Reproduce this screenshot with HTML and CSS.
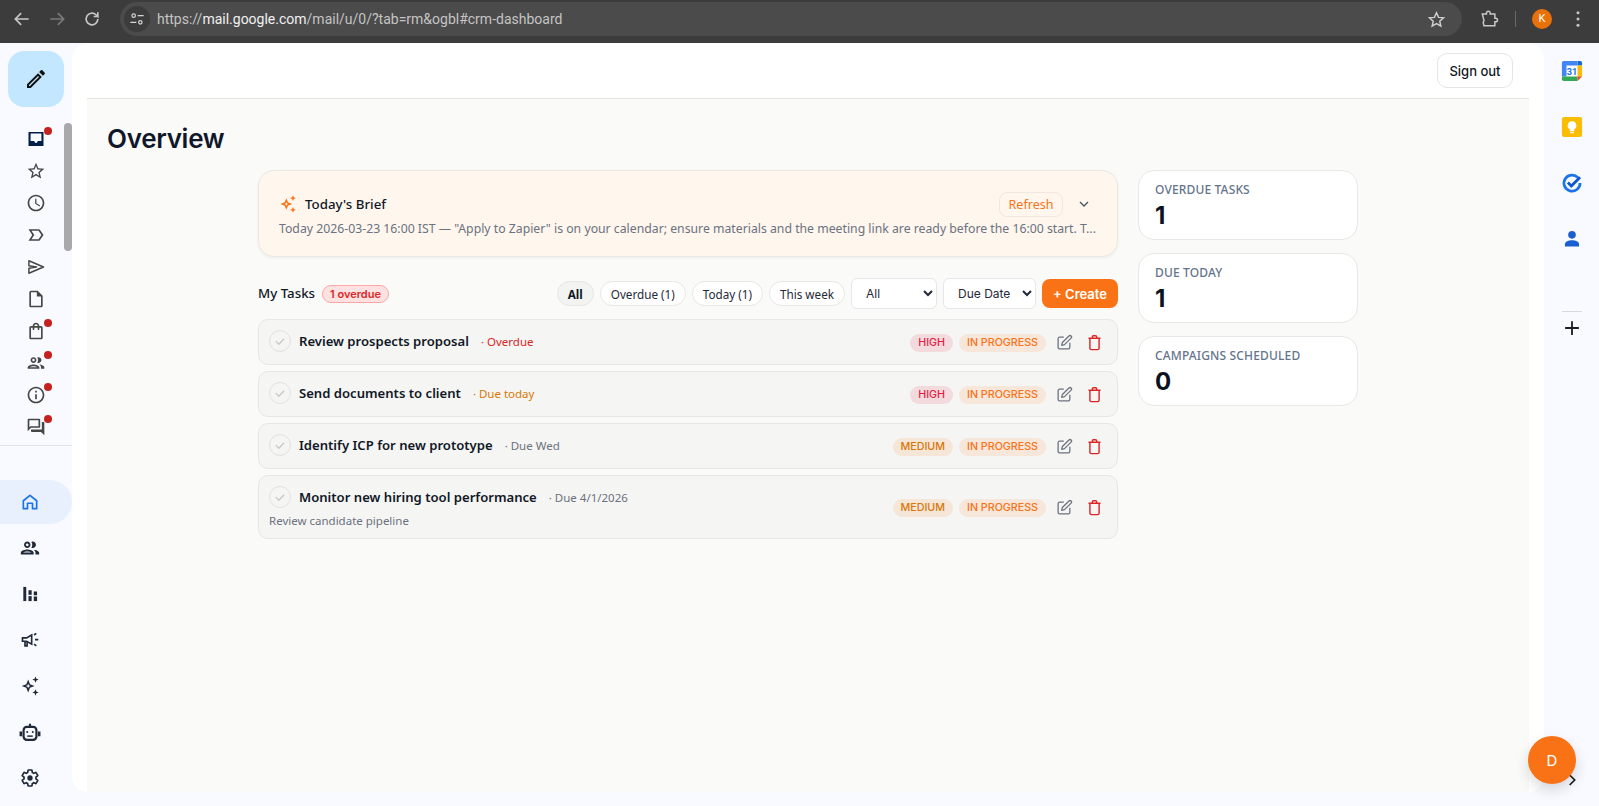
FILE: index.html
```html
<!DOCTYPE html>
<html lang="en">
<head>
<meta charset="utf-8">
<title>CRM Dashboard</title>
<link rel="stylesheet" href="styles.css">
</head>
<body>
<header class="chrome">
  <div class="nav-btns">
    <svg class="cicon" viewBox="0 0 24 24"><path d="M20 12H5M11 5l-7 7 7 7" fill="none" stroke="#c7c7c7" stroke-width="2"/></svg>
    <svg class="cicon" viewBox="0 0 24 24"><path d="M4 12h15M13 5l7 7-7 7" fill="none" stroke="#7a7a7a" stroke-width="2"/></svg>
    <svg class="cicon" viewBox="0 0 24 24"><path d="M19 12a7 7 0 1 1-2.2-5.1L19 9V4M19 9h-5" fill="none" stroke="#c7c7c7" stroke-width="2"/></svg>
  </div>
  <div class="omnibox">
    <span class="site-chip"><svg viewBox="0 0 24 24" width="16" height="16"><circle cx="7" cy="7" r="2.6" fill="none" stroke="#d5d5d5" stroke-width="1.8"/><path d="M13 7h9M2 17h9" stroke="#d5d5d5" stroke-width="1.8"/><circle cx="17" cy="17" r="2.6" fill="none" stroke="#d5d5d5" stroke-width="1.8"/></svg></span>
    <span class="url">https://<b>mail.google.com</b>/mail/u/0/?tab=rm&amp;ogbl#crm-dashboard</span>
    <svg class="star-ic" viewBox="0 0 24 24"><path d="M12 3.500l2.600 5.800 6.300.6-4.800 4.200 1.400 6.200L12 17.100l-5.500 3.200 1.400-6.200-4.800-4.200 6.300-.6z" fill="none" stroke="#d0d0d0" stroke-width="1.800"/></svg>
  </div>
  <div class="chrome-right">
    <svg class="cicon" viewBox="0 0 24 24"><path d="M4 6h5V5a2.200 2.200 0 0 1 4.400 0v1H19v5h1a2.200 2.200 0 0 1 0 4.400h-1V20H6l-1-4 1-2-2-8z" fill="none" stroke="#c7c7c7" stroke-width="1.800"/></svg>
    <span class="chrome-sep"></span>
    <span class="profile">K</span>
    <svg class="dots" viewBox="0 0 4 18"><circle cx="2" cy="2" r="1.700"/><circle cx="2" cy="9" r="1.700"/><circle cx="2" cy="16" r="1.700"/></svg>
  </div>
</header>

<div class="app">
  <aside class="sidebar">
    <button class="compose"><svg viewBox="0 0 24 24" width="24" height="24"><path d="M14.060 9.020l.92.92L5.920 19H5v-.92l9.060-9.060M17.660 3c-.25 0-.51.1-.7.29l-1.830 1.830 3.750 3.750 1.830-1.830c.39-.39.39-1.020 0-1.410l-2.340-2.340c-.2-.2-.45-.29-.71-.29zm-3.600 3.190L3 17.250V21h3.750L17.810 9.940l-3.750-3.750z" fill="#111"/></svg></button>
    <div class="mail-list">
      <span class="scrollthumb"></span>
      <a class="mail-item"><svg viewBox="0 0 24 24"><path d="M3 3.500h18v17H3zM5.500 5.500v9H10c0 1.300.9 2.300 2 2.300s2-1 2-2.300h4.500v-9z" fill="#041e49" fill-rule="evenodd"/></svg><i class="dot"></i></a>
      <a class="mail-item"><svg viewBox="0 0 24 24"><path d="M22 9.240l-7.190-.62L12 2 9.190 8.630 2 9.240l5.460 4.730L5.820 21 12 17.270 18.180 21l-1.630-7.030L22 9.240zM12 15.400l-3.760 2.270 1-4.280-3.320-2.880 4.380-.38L12 6.100l1.710 4.040 4.380.38-3.320 2.880 1 4.280L12 15.400z"/></svg></a>
      <a class="mail-item"><svg viewBox="0 0 24 24"><path d="M11.990 2C6.470 2 2 6.480 2 12s4.470 10 9.990 10C17.520 22 22 17.520 22 12S17.520 2 11.990 2zM12 20c-4.420 0-8-3.580-8-8s3.580-8 8-8 8 3.580 8 8-3.580 8-8 8zm.5-13H11v6l5.250 3.150.75-1.230-4.500-2.670z"/></svg></a>
      <a class="mail-item"><svg viewBox="0 0 24 24"><path d="M15 19H3l4.500-7L3 5h12c.65 0 1.260.31 1.630.84L21 12l-4.370 6.160c-.37.52-.98.84-1.630.84zm-8.500-2H15l3.500-5L15 7H6.500l3.500 5-3.500 5z"/></svg></a>
      <a class="mail-item"><svg viewBox="0 0 24 24"><path d="M3.500 4.500L21 12 3.500 19.500v-6l9-1.500-9-1.500z" fill="none" stroke="#444746" stroke-width="1.800" stroke-linejoin="round"/></svg></a>
      <a class="mail-item"><svg viewBox="0 0 24 24"><path d="M14 2H6c-1.100 0-1.990.9-1.990 2L4 20c0 1.100.89 2 1.990 2H18c1.100 0 2-.9 2-2V8l-6-6zM6 20V4h7v5h5v11H6z"/></svg></a>
      <a class="mail-item"><svg viewBox="0 0 24 24"><path d="M18 6h-2c0-2.210-1.790-4-4-4S8 3.790 8 6H6c-1.100 0-2 .9-2 2v12c0 1.100.9 2 2 2h12c1.100 0 2-.9 2-2V8c0-1.100-.9-2-2-2zm-6-2c1.100 0 2 .9 2 2h-4c0-1.100.9-2 2-2zm6 16H6V8h2v2c0 .55.45 1 1 1s1-.45 1-1V8h4v2c0 .55.45 1 1 1s1-.45 1-1V8h2v12z"/></svg><i class="dot"></i></a>
      <a class="mail-item"><svg viewBox="0 0 24 24"><use href="#ic-people"/></svg><i class="dot"></i></a>
      <a class="mail-item"><svg viewBox="0 0 24 24"><path d="M11 7h2v2h-2zm0 4h2v6h-2zm1-9C6.480 2 2 6.480 2 12s4.480 10 10 10 10-4.480 10-10S17.520 2 12 2zm0 18c-4.410 0-8-3.590-8-8s3.590-8 8-8 8 3.590 8 8-3.590 8-8 8z"/></svg><i class="dot"></i></a>
      <a class="mail-item"><svg viewBox="0 0 24 24"><path d="M15 4v7H5.170L4 12.170V4h11m1-2H3c-.55 0-1 .45-1 1v14l4-4h10c.55 0 1-.45 1-1V3c0-.55-.45-1-1-1zm5 4h-2v9H6v2c0 .55.45 1 1 1h11l4 4V7c0-.55-.45-1-1-1z"/></svg><i class="dot"></i></a>
    </div>
    <div class="side-divider"></div>
    <nav class="crm-nav">
      <a class="crm-item active"><svg viewBox="0 0 24 24" fill="none" stroke="#1a73e8" stroke-width="2" stroke-linejoin="round"><path d="M4 10.500L12 4l8 6.500V20h-5v-6.500H9V20H4z"/></svg></a>
      <a class="crm-item"><svg class="big" viewBox="0 0 24 24" fill="#1f2937"><use href="#ic-people"/></svg></a>
      <a class="crm-item"><svg viewBox="0 0 24 24" fill="#1f2937"><rect x="4" y="3.500" width="3.500" height="17"/><rect x="10.200" y="7.500" width="3.800" height="5.500"/><rect x="10.200" y="14.500" width="3.800" height="6"/><rect x="16.500" y="9" width="4" height="4.500"/><rect x="16.500" y="15" width="4" height="5.500"/></svg></a>
      <a class="crm-item"><svg viewBox="0 0 24 24" fill="none" stroke="#1f2937" stroke-width="2"><path d="M3 9.500h5l6-3.500v11l-6-3.500H3z" fill="#fff"/><path d="M6 14v5h2.500v-5"/><path d="M18 11.500h4M17 6l2.500-2M17 17l2.500 2"/></svg></a>
      <a class="crm-item"><svg class="big" viewBox="0 0 24 24" fill="#1f2937"><use href="#ic-spark"/></svg></a>
      <a class="crm-item"><svg class="big" viewBox="0 0 24 24" fill="none" stroke="#1f2937" stroke-width="2.400"><rect x="5" y="6.500" width="14" height="14" rx="3.500"/><path d="M12 6.500V3"/><path d="M2 11.500v5M22 11.500v5" stroke-width="2.800"/><circle cx="9" cy="12" r="1.100" fill="#1f2937" stroke="none"/><circle cx="15" cy="12" r="1.100" fill="#1f2937" stroke="none"/><path d="M9 16.500h6" stroke-width="1.600"/></svg></a>
      <a class="crm-item"><svg viewBox="0 0 24 24"><path d="M19.140 12.940c.04-.3.06-.61.06-.94 0-.32-.02-.64-.07-.94l2.030-1.580c.18-.14.23-.41.12-.61l-1.920-3.320c-.12-.22-.37-.29-.59-.22l-2.390.96c-.5-.38-1.030-.7-1.620-.94l-.36-2.540c-.04-.24-.24-.41-.48-.41h-3.840c-.24 0-.43.17-.47.41l-.36 2.540c-.59.24-1.130.57-1.620.94l-2.390-.96c-.22-.08-.47 0-.59.22L2.740 8.870c-.12.21-.08.47.12.61l2.030 1.580c-.05.3-.09.63-.09.94s.02.64.07.94l-2.030 1.580c-.18.14-.23.41-.12.61l1.920 3.320c.12.22.37.29.59.22l2.390-.96c.5.38 1.030.7 1.620.94l.36 2.540c.05.24.24.41.48.41h3.840c.24 0 .44-.17.47-.41l.36-2.540c.59-.24 1.130-.56 1.620-.94l2.390.96c.22.08.47 0 .59-.22l1.920-3.320c.12-.22.07-.47-.12-.61l-2.010-1.580z" fill="none" stroke="#1f2937" stroke-width="2"/><circle cx="12" cy="12" r="3.200" fill="#1f2937"/></svg></a>
    </nav>
  </aside>

  <main class="card">
    <div class="topbar"><button class="signout">Sign out</button></div>
    <div class="page">
      <h1 class="page-title">Overview</h1>
      <div class="columns">
        <section class="left-col">
          <div class="brief">
            <div class="brief-head">
              <svg class="brief-ic" viewBox="0 0 24 24" fill="#f97316"><use href="#ic-spark"/></svg>
              <span class="brief-title">Today's Brief</span>
              <button class="refresh">Refresh</button>
              <svg class="chev" viewBox="0 0 24 24"><path d="M6 9l6 6 6-6" fill="none" stroke="#4b5563" stroke-width="2"/></svg>
            </div>
            <p class="brief-text">Today 2026-03-23 16:00 IST — "Apply to Zapier" is on your calendar; ensure materials and the meeting link are ready before the 16:00 start. T...</p>
          </div>

          <div class="tasks-head">
            <span class="tasks-title">My Tasks</span>
            <span class="overdue-badge">1 overdue</span>
            <div class="filters">
              <button class="chip selected">All</button>
              <button class="chip">Overdue (1)</button>
              <button class="chip">Today (1)</button>
              <button class="chip">This week</button>
              <select class="sel sel-a"><option>All</option></select>
              <select class="sel sel-b"><option>Due Date</option></select>
              <button class="create">+ Create</button>
            </div>
          </div>

          <div class="task-list">
            <article class="task">
              <div class="task-main">
                <div class="task-line">
                  <span class="check"><svg viewBox="0 0 24 24"><path d="M5 12.500l5 5L19 8" fill="none" stroke="#c9c9c9" stroke-width="2.400"/></svg></span>
                  <span class="task-name">Review prospects proposal</span>
                  <span class="due red">· Overdue</span>
                </div>
              </div>
              <span class="pill high">HIGH</span>
              <span class="pill prog">IN PROGRESS</span>
              <svg class="act" viewBox="0 0 24 24"><use href="#ic-edit"/></svg>
              <svg class="act" viewBox="0 0 24 24"><use href="#ic-trash"/></svg>
            </article>
            <article class="task">
              <div class="task-main">
                <div class="task-line">
                  <span class="check"><svg viewBox="0 0 24 24"><path d="M5 12.500l5 5L19 8" fill="none" stroke="#c9c9c9" stroke-width="2.400"/></svg></span>
                  <span class="task-name">Send documents to client</span>
                  <span class="due amber">· Due today</span>
                </div>
              </div>
              <span class="pill high">HIGH</span>
              <span class="pill prog">IN PROGRESS</span>
              <svg class="act" viewBox="0 0 24 24"><use href="#ic-edit"/></svg>
              <svg class="act" viewBox="0 0 24 24"><use href="#ic-trash"/></svg>
            </article>
            <article class="task">
              <div class="task-main">
                <div class="task-line">
                  <span class="check"><svg viewBox="0 0 24 24"><path d="M5 12.500l5 5L19 8" fill="none" stroke="#c9c9c9" stroke-width="2.400"/></svg></span>
                  <span class="task-name">Identify ICP for new prototype</span>
                  <span class="due">· Due Wed</span>
                </div>
              </div>
              <span class="pill med">MEDIUM</span>
              <span class="pill prog">IN PROGRESS</span>
              <svg class="act" viewBox="0 0 24 24"><use href="#ic-edit"/></svg>
              <svg class="act" viewBox="0 0 24 24"><use href="#ic-trash"/></svg>
            </article>
            <article class="task">
              <div class="task-main">
                <div class="task-line">
                  <span class="check"><svg viewBox="0 0 24 24"><path d="M5 12.500l5 5L19 8" fill="none" stroke="#c9c9c9" stroke-width="2.400"/></svg></span>
                  <span class="task-name">Monitor new hiring tool performance</span>
                  <span class="due">· Due 4/1/2026</span>
                </div>
                <div class="task-desc">Review candidate pipeline</div>
              </div>
              <span class="pill med">MEDIUM</span>
              <span class="pill prog">IN PROGRESS</span>
              <svg class="act" viewBox="0 0 24 24"><use href="#ic-edit"/></svg>
              <svg class="act" viewBox="0 0 24 24"><use href="#ic-trash"/></svg>
            </article>
          </div>
        </section>

        <aside class="right-col">
          <div class="stat"><div class="stat-label">OVERDUE TASKS</div><div class="stat-num">1</div></div>
          <div class="stat"><div class="stat-label">DUE TODAY</div><div class="stat-num">1</div></div>
          <div class="stat"><div class="stat-label">CAMPAIGNS SCHEDULED</div><div class="stat-num">0</div></div>
        </aside>
      </div>
    </div>
  </main>

  <aside class="rail">
    <a class="rail-item"><svg viewBox="0 0 24 24" width="22" height="22"><rect x="1" y="1" width="22" height="22" rx="2" fill="#fff"/><path d="M18 1h3a2 2 0 0 1 2 2v3h-5z" fill="#1967d2"/><path d="M1 6V3a2 2 0 0 1 2-2h15v5H6v12H1z" fill="#4285f4"/><path d="M18 6h5v12h-5z" fill="#fbbc04"/><path d="M1 18h17v5H3a2 2 0 0 1-2-2z" fill="#34a853"/><path d="M18 18h5l-5 5z" fill="#ea4335"/><text x="12" y="16" class="cal-num">31</text></svg></a>
    <a class="rail-item"><svg viewBox="0 0 24 24" width="22" height="22"><rect x="1" y="1" width="22" height="22" rx="2.500" fill="#fbbc04"/><circle cx="12" cy="10.500" r="4.800" fill="#fff"/><rect x="9.500" y="15" width="5" height="1.600" fill="#fff"/><rect x="10" y="17.500" width="4" height="1.300" fill="#fff"/></svg></a>
    <a class="rail-item"><svg viewBox="0 0 24 24" width="22" height="22"><path d="M18.500 6.200A8.800 8.800 0 1 0 20.800 12" fill="none" stroke="#1a73e8" stroke-width="3"/><path d="M7.500 11.500l3.800 3.800 9.500-9.500" fill="none" stroke="#0b57d0" stroke-width="3"/></svg></a>
    <a class="rail-item"><svg viewBox="0 0 24 24" width="20" height="20" fill="#1a5fd0"><circle cx="12" cy="7" r="4.600"/><path d="M3.500 21v-2.500C3.500 15 8 13.500 12 13.500s8.500 1.500 8.500 5V21z"/></svg></a>
    <div class="rail-divider"></div>
    <a class="rail-plus"><svg viewBox="0 0 24 24" width="22" height="22"><path d="M12 4.500v15M4.500 12h15" stroke="#1f1f1f" stroke-width="2"/></svg></a>
    <a class="rail-chev"><svg viewBox="0 0 24 24" width="16" height="16"><path d="M8.500 4.500l7.500 7.500-7.500 7.500" fill="none" stroke="#1f1f1f" stroke-width="2.600"/></svg></a>
  </aside>
  <button class="fab">D</button>
</div>

<svg class="defs" width="0" height="0">
  <symbol id="ic-edit" viewBox="0 0 24 24"><path d="M11 4.500H5a2 2 0 0 0-2 2V19a2 2 0 0 0 2 2h12.500a2 2 0 0 0 2-2v-6.500" fill="none" stroke="#6b7280" stroke-width="1.800"/><path d="M18.300 2.800a2.100 2.100 0 0 1 3 3L12 15l-4 1 1-4z" fill="none" stroke="#6b7280" stroke-width="1.800" stroke-linejoin="round"/></symbol>
  <symbol id="ic-trash" viewBox="0 0 24 24"><path d="M3.500 6h17M9 6V4a1.500 1.500 0 0 1 1.500-1.500h3A1.500 1.500 0 0 1 15 4v2M5.500 6v14a2 2 0 0 0 2 2h9a2 2 0 0 0 2-2V6" fill="none" stroke="#dc2626" stroke-width="2"/></symbol>
  <symbol id="ic-people" viewBox="0 0 24 24"><path d="M9 13.750c-2.340 0-7 1.170-7 3.500V19h14v-1.750c0-2.330-4.660-3.500-7-3.500zM4.340 17c.84-.58 2.870-1.250 4.660-1.250s3.820.67 4.660 1.250H4.340zM9 12c1.930 0 3.500-1.570 3.500-3.500S10.930 5 9 5 5.500 6.570 5.500 8.500 7.070 12 9 12zm0-5c.83 0 1.500.67 1.500 1.500S9.830 10 9 10s-1.500-.67-1.500-1.500S8.170 7 9 7zm7.040 6.810c1.160.84 1.960 1.960 1.960 3.440V19h4v-1.750c0-2.020-3.500-3.170-5.960-3.440zM15 12c1.930 0 3.500-1.570 3.500-3.500S16.930 5 15 5c-.54 0-1.040.13-1.500.35.63.89 1 1.980 1 3.150s-.37 2.260-1 3.150c.46.22.96.35 1.500.35z"/></symbol>
  <symbol id="ic-spark" viewBox="0 0 24 24"><path d="M10 5l2 5 5 2-5 2-2 5-2-5-5-2 5-2zm0 4.600L9.300 11.300 7.600 12l1.700.7.7 1.700.7-1.700 1.700-.7-1.700-.7z" fill-rule="evenodd"/><path d="M18 1.500l1 2.500 2.500 1-2.500 1-1 2.500-1-2.500-2.500-1 2.500-1zM18 15.500l1 2.500 2.500 1-2.500 1-1 2.500-1-2.500-2.500-1 2.500-1z"/></symbol>
</svg>
</body>
</html>
```
FILE: styles.css
```css
* { box-sizing: border-box; }
html, body { margin: 0; height: 100%; overflow: hidden; }
body { font-family: "Noto Sans", "Liberation Sans", sans-serif; color: #111827; background: #f8faff; }
button { font-family: inherit; cursor: pointer; }
p, h1 { margin: 0; }
.defs { position: absolute; }

.chrome { height: 43px; background: #3c3c3c; display: flex; align-items: flex-start; }
.nav-btns { width: 120px; height: 38px; display: flex; align-items: center; gap: 15px; padding-left: 12px; flex: none; }
.cicon { width: 20px; height: 20px; flex: none; }
.omnibox { flex: none; width: 1342px; height: 34px; margin-top: 2px; background: #4b4b4b; border-radius: 17px; display: flex; align-items: center; padding: 0 14px 0 4px; }
.site-chip { width: 26px; height: 26px; border-radius: 50%; background: #3c3c3c; display: flex; align-items: center; justify-content: center; flex: none; }
.url { margin-left: 7px; font: 14px/1 "Roboto", sans-serif; color: #c4c4c4; flex: 1; }
.url b { color: #f1f1f1; font-weight: 400; }
.star-ic { width: 19px; height: 19px; margin-right: 2px; }
.chrome-right { flex: 1; height: 38px; display: flex; align-items: center; padding-left: 17px; }
.chrome-sep { width: 1px; height: 16px; background: #6a6a6a; margin-left: 16px; margin-right: 16px; }
.profile { width: 20px; height: 20px; border-radius: 50%; background: #e8710a; color: #fff; font: 11px/20px "Roboto", sans-serif; text-align: center; }
.dots { width: 4px; height: 16px; margin-left: 24px; fill: #c7c7c7; }

.app { position: relative; height: 763px; display: flex; }
.sidebar { width: 72px; flex: none; }
.compose { display: flex; align-items: center; justify-content: center; width: 56px; height: 56px; margin: 8px 0 0 8px; border: 0; border-radius: 16px; background: #c2e7ff; }
.mail-list { position: relative; margin-top: 16px; display: flex; flex-direction: column; }
.scrollthumb { position: absolute; right: 0; top: 0; width: 8px; height: 128px; border-radius: 4px; background: #a9a9ad; }
.mail-item { position: relative; height: 32px; display: flex; align-items: center; justify-content: center; width: 72px; }
.mail-item svg { width: 20px; height: 20px; fill: #444746; }
.dot { position: absolute; left: 44px; top: 4px; width: 8px; height: 8px; border-radius: 50%; background: #c5221f; }
.side-divider { height: 1px; background: #e3e3e3; margin-top: 2px; }
.crm-nav { display: flex; flex-direction: column; gap: 2px; margin-top: 34px; }
.crm-item { height: 44px; width: 72px; display: flex; align-items: center; padding-left: 20px; border-radius: 0 22px 22px 0; }
.crm-item.active { background: #e8f0fe; }
.crm-item svg { width: 20px; height: 20px; }
.crm-item svg.big { width: 22px; height: 22px; margin-left: -1px; }

.card { flex: 1; min-width: 0; height: 749px; background: #fff; border-radius: 16px; padding: 0 15px; display: flex; flex-direction: column; overflow: hidden; }
.topbar { height: 56px; flex: none; background: #fff; border-bottom: 1px solid #e5e5e3; display: flex; justify-content: flex-end; align-items: flex-start; padding: 10px 16px 0 0; }
.signout { height: 35px; width: 76px; padding: 0; background: #fff; border: 1px solid #e5e5e5; border-radius: 10px; font: 500 13px "Inter", sans-serif; color: #111827; }
.page { flex: 1; background: #fafaf8; padding: 22px 20px 0; }
.page-title { font: 600 26px/36px "Inter", sans-serif; color: #0f172a; letter-spacing: -.3px; }
.columns { width: 1100px; margin: 13px auto 0; display: flex; gap: 20px; }
.left-col { width: 860px; flex: none; }
.right-col { width: 220px; flex: none; display: flex; flex-direction: column; gap: 13px; }

.brief { height: 87px; background: #fff6ee; border: 1px solid #ebe8e4; border-radius: 16px; padding: 20px 20px 0; box-shadow: 0 1px 3px rgba(0,0,0,.06); }
.brief-head { display: flex; align-items: center; height: 26px; }
.brief-ic { width: 20px; height: 20px; flex: none; margin-left: -1px; }
.brief-title { margin-left: 7px; font-size: 13.300px; font-weight: 500; color: #111827; flex: 1; }
.refresh { width: 64px; height: 25px; padding: 0; border: 1px solid #f0e8e0; border-radius: 8px; background: transparent; color: #f97316; font-size: 12.500px; }
.chev { width: 16px; height: 16px; margin: 0 5px 0 13px; }
.brief-text { font-size: 12.250px; line-height: 18px; color: #6b7280; white-space: nowrap; margin-top: 3px; }

.tasks-head { display: flex; align-items: center; height: 31px; margin-top: 21px; }
.tasks-title { font-size: 13.300px; font-weight: 500; color: #111827; margin-bottom: 2px; }
.overdue-badge { margin-left: 7px; height: 18px; padding: 0 7px; border: 1px solid #fca5a5; border-radius: 9px; background: #fee2e2; color: #dc2626; font: 600 11px/16px "Inter", sans-serif; }
.filters { margin-left: auto; display: flex; align-items: center; gap: 6px; }
.chip { height: 25px; padding: 0 10px; border: 1px solid #e7e7e4; border-radius: 13px; background: #fff; color: #1f2937; font: 400 11.700px "Noto Sans", sans-serif; }
.chip.selected { background: #f3f3f1; font-weight: 700; color: #111827; }
.sel { height: 31px; padding: 0 0 0 10px; border: 1px solid #e5e7eb; border-radius: 6px; background: #fff; font: 400 12px "Inter", sans-serif; color: #1f2937; }
.sel-a { width: 86px; }
.sel-b { width: 93px; }
.create { width: 76px; height: 29px; padding: 0; border: 0; border-radius: 8px; background: #f97316; color: #fff; font: 600 13px "Inter", sans-serif; }

.task-list { display: flex; flex-direction: column; gap: 6px; margin-top: 10px; }
.task { display: flex; align-items: center; gap: 6px; min-height: 46px; padding: 0 14px 0 10px; background: #f5f5f3; border: 1px solid #e7e7e4; border-radius: 10px; }
.task-main { flex: 1; min-width: 0; align-self: flex-start; padding: 10px 0 9px; }
.task-line { display: flex; align-items: center; height: 22px; }
.check { width: 22px; height: 22px; flex: none; border: 1px solid #e1e1df; border-radius: 50%; display: flex; align-items: center; justify-content: center; }
.check svg { width: 14px; height: 14px; }
.task-name { margin-left: 8px; font-size: 13.100px; font-weight: 600; color: #111827; }
.due { margin-left: 12px; font-size: 11.500px; color: #6b7280; }
.due.red { color: #dc2626; }
.due.amber { color: #d97706; }
.task-desc { margin-top: 5px; font-size: 11.500px; line-height: 16px; color: #6b7280; }
.pill { height: 18px; margin-top: 2px; padding: 0 8px; border-radius: 9px; font: 500 10.700px/18px "Inter", sans-serif; flex: none; }
.pill.high { background: #f3dadd; color: #e11d48; }
.pill.med { background: #f5e6d8; color: #d97706; }
.pill.prog { background: #f7e6da; color: #f97316; }
.act { width: 17px; height: 17px; margin-left: 4px; flex: none; }
.act + .act { margin-left: 7px; }

.stat { height: 70px; background: #fff; border: 1px solid #e7e7e4; border-radius: 16px; padding: 11px 16px; }
.stat-label { font-size: 12px; line-height: 16px; font-weight: 500; color: #64748b; letter-spacing: .15px; }
.stat-num { font: 700 24px/30px "Inter", sans-serif; color: #0b1220; margin-top: 3px; }

.rail { width: 55px; flex: none; position: relative; display: flex; flex-direction: column; align-items: center; }
.rail-item { height: 56px; width: 100%; display: flex; align-items: center; justify-content: center; }
.rail-divider { width: 20px; height: 1px; background: #d9d9d9; margin-top: 44px; }
.rail-plus { height: 32px; display: flex; align-items: center; }
.rail-chev { margin-top: auto; margin-bottom: 18px; display: flex; }
.cal-num { font: 700 10px "Roboto", sans-serif; fill: #1a73e8; text-anchor: middle; }
.fab { position: absolute; left: 1528px; top: 693px; width: 48px; height: 48px; border: 0; border-radius: 50%; background: #f97316; color: #fff; font: 400 15px "Inter", sans-serif; box-shadow: 0 6px 14px rgba(0,0,0,.15); }
```
